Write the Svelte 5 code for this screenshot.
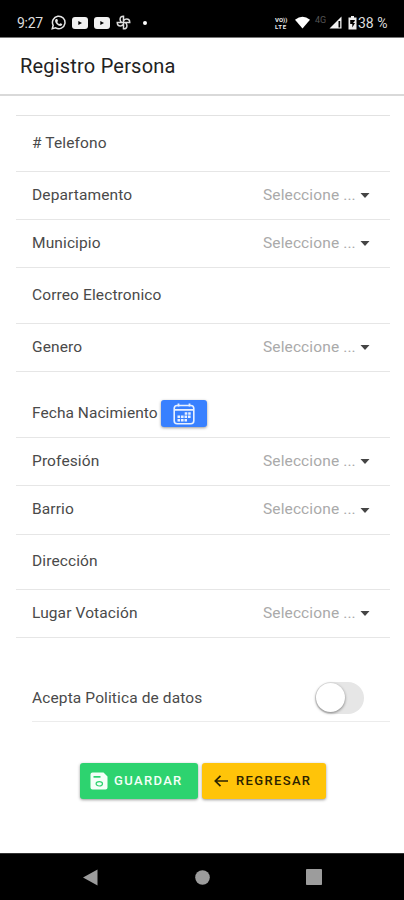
<script>
  const rows = [
    { label: '# Telefono', h: 56 },
    { label: 'Departamento', h: 48, select: true },
    { label: 'Municipio', h: 48, select: true },
    { label: 'Correo Electronico', h: 56 },
    { label: 'Genero', h: 48, select: true },
    { label: 'Fecha Nacimiento', h: 66, date: true },
    { label: 'Profesión', h: 48, select: true },
    { label: 'Barrio', h: 49, select: true },
    { label: 'Dirección', h: 55 },
    { label: 'Lugar Votación', h: 48, select: true }
  ];
  let accepted = $state(false);
</script>

<div class="screen">
  <div class="status">
    <span class="time">9:27</span>
    <svg class="wa" width="15" height="15" viewBox="0 0 24 24" fill="none" stroke="#e8e8e8">
      <path d="M2 22l1.500-5.500A10 10 0 1 1 7.500 20.600z" stroke-width="2.400" />
      <path d="M8 6.500l2 0 1.200 3-1.200 1.500c1 2 2 2.800 3.500 3.500l1.500-1.500 3 1.500c0 2-1.500 3-3 3-4-.4-8.500-5-8.500-8.500 0-1 .5-2 1.500-2.500z" fill="#e8e8e8" stroke="none" />
    </svg>
    <svg class="yt" width="16" height="12" viewBox="0 0 16 12"><rect width="16" height="12" rx="3" fill="#f2f2f2" /><path d="M6.300 3.900v4.200l3.700-2.100z" fill="#000" /></svg>
    <svg class="yt" width="16" height="12" viewBox="0 0 16 12"><rect width="16" height="12" rx="3" fill="#f2f2f2" /><path d="M6.300 3.900v4.200l3.700-2.100z" fill="#000" /></svg>
    <svg class="fan" width="15" height="15" viewBox="0 0 24 24" fill="none" stroke="#ddd" stroke-width="2.400">
      <path d="M12 12V2C8.500 2 6.500 4 6.500 7c0 2 1 3.500 2.500 5zM12 12h10c0-3-2-5.500-5-5.500-2 0-3.500 1-5 2.500zM12 12v10c3 0 5.500-2 5.500-5 0-2-1-3.500-2.500-5zM12 12H2c0 3 2 5.500 5 5.500 2 0 3.500-1 5-2.500z" />
    </svg>
    <i class="dot"></i>
    <span class="grow"></span>
    <span class="vo"><b>VO))</b><b>LTE</b></span>
    <svg class="wifi" width="15" height="13" viewBox="0 0 16 13"><path d="M0 3.500Q8-3 16 3.500L8 13z" fill="#fff" /></svg>
    <span class="net">4G</span>
    <svg class="signal" width="13" height="13" viewBox="0 0 13 13"><path d="M12.500.5v12H.5z" fill="#f4f4f4" /><path d="M9.500 5h1.700v6.500H9.500z" fill="#000" /></svg>
    <svg class="bat" width="9" height="14" viewBox="0 0 9 14"><path d="M3 0h3v1.500h2.500v12h-8v-12H3z" fill="#eee" /><path d="M2.200 4h4.600v1L5 7h2l-2.700 4.500V8H2.200z" fill="#000" /></svg>
    <span class="pct">38 %</span>
  </div>

  <header><h1>Registro Persona</h1></header>

  <main>
    <div class="list">
      {#each rows as row}
        <div class="row" class:daterow={row.date} style:height="{row.h}px">
          <span class="label">{row.label}</span>
          {#if row.date}
            <button class="cal" aria-label="Fecha Nacimiento">
              <svg width="22" height="22" viewBox="0 0 22 22" fill="none" stroke="#e9f1ff">
                <rect x="1.200" y="2.500" width="19.600" height="18.300" rx="3" stroke-width="1.600" />
                <path d="M1.500 6.800h19M5.500.5v3M16.500.5v3" stroke-width="1.800" />
                <path d="M11.700 10.500h6M4.500 13.800h13.500M4.500 17.200h9.500" stroke-width="2.500" stroke-dasharray="2.600 .9" />
              </svg>
            </button>
          {/if}
          {#if row.select}
            <span class="select">Seleccione ...</span>
            <svg class="caret" width="10" height="5" viewBox="0 0 10 5"><path d="M.5 0h9L5 5z" fill="#444" /></svg>
          {/if}
        </div>
      {/each}
    </div>

    <div class="accept">
      <span class="label">Acepta Politica de datos</span>
      <button class="toggle" class:on={accepted} aria-label="Acepta Politica de datos" onclick={() => (accepted = !accepted)}><i></i></button>
    </div>

    <div class="actions">
      <button class="save">
        <svg width="18" height="18" viewBox="0 0 18 18">
          <path d="M2.500.5h11l4 4v11a2 2 0 0 1-2 2h-13a2 2 0 0 1-2-2v-13a2 2 0 0 1 2-2z" fill="#f4fff8" />
          <rect x="3.500" y="4" width="7" height="1.700" fill="#2dd36f" />
          <ellipse cx="9.300" cy="11.800" rx="3.200" ry="2.200" fill="none" stroke="#2dd36f" stroke-width="1.200" />
        </svg>
        <span>GUARDAR</span>
      </button>
      <button class="back">
        <svg width="14" height="12" viewBox="0 0 14 12" fill="none" stroke="#2b2200" stroke-width="1.700"><path d="M6.500.8L1.300 6l5.200 5.200M1.300 6H14" /></svg>
        <span>REGRESAR</span>
      </button>
    </div>
  </main>

  <nav>
    <svg width="15" height="17" viewBox="0 0 15 17"><path d="M0 8.500L14.500.5v16z" fill="#9c9c9c" /></svg>
    <svg width="15" height="15" viewBox="0 0 15 15"><circle cx="7.500" cy="7.500" r="7.300" fill="#9c9c9c" /></svg>
    <svg width="16" height="16" viewBox="0 0 16 16"><rect width="16" height="16" rx=".8" fill="#9c9c9c" /></svg>
  </nav>
</div>

<style>
  .screen { width: 404px; height: 900px; display: flex; flex-direction: column; background: #fff; font-family: Roboto, "Liberation Sans", sans-serif; color: #4a4a4a; overflow: hidden; }
  button { border: 0; padding: 0; font-family: inherit; }
  svg { display: block; flex: none; }
  .status { height: 38px; flex: none; box-sizing: border-box; background: #000; border-bottom: 1px solid #777; display: flex; align-items: center; padding: 8px 16px 0 17px; color: #ddd; }
  .time { width: 34px; font-size: 14px; letter-spacing: -.3px; padding-top: 1px; }
  .yt { margin-left: 6px; }
  .fan { margin-left: 6px; }
  .dot { width: 4px; height: 4px; border-radius: 50%; background: #fff; margin-left: 12px; }
  .grow { flex: 1; }
  .vo { display: flex; flex-direction: column; font-size: 6px; line-height: 7px; width: 14px; color: #eee; }
  .vo b:last-child { letter-spacing: .7px; }
  .wifi { margin-left: 6px; }
  .net { font-size: 9px; color: #555; margin: -6px 0 0 5px; width: 12px; }
  .signal { margin-left: 2px; }
  .bat { margin-left: 6px; }
  .pct { font-size: 14px; width: 30px; margin-left: 1px; white-space: nowrap; padding-top: 1px; }
  header { height: 58px; flex: none; box-sizing: border-box; border-bottom: 2px solid #d9d9d9; display: flex; align-items: center; padding-left: 20px; }
  h1 { margin: 0; font-size: 20px; font-weight: 400; color: #222; letter-spacing: .2px; line-height: 24px; }
  main { flex: 1; display: flex; flex-direction: column; }
  .list { margin: 19px 14px 0 16px; border-top: 1px solid #e2e2e2; }
  .row { box-sizing: border-box; border-bottom: 1px solid #e6e6e6; display: flex; align-items: center; padding: 0 20px 0 16px; }
  .label, .select { font-size: 15.5px; letter-spacing: .12px; line-height: 20px; padding-bottom: 2px; white-space: nowrap; }
  .daterow { padding-top: 18px; }
  .daterow .label { width: 127px; letter-spacing: .05px; }
  .cal { flex: none; width: 46px; height: 27px; margin-left: 2px; border-radius: 3px; background: #3880ff; display: flex; align-items: center; justify-content: center; box-shadow: 0 1px 3px #0006; }
  .select { margin-left: auto; width: 92px; color: #aaa; }
  .caret { margin-left: 5px; }
  .accept { height: 84px; box-sizing: border-box; margin: 0 14px 0 32px; border-bottom: 1px solid #ececec; display: flex; align-items: center; justify-content: space-between; padding: 36px 26px 0 0; }
  .accept .label { padding-bottom: 0; }
  .toggle { width: 49px; height: 32px; border-radius: 16px; background: #e6e6e6; display: flex; align-items: center; }
  .toggle i { width: 29px; height: 29px; margin-left: 1px; border-radius: 50%; background: #fff; box-shadow: 0 1px 3px #0007; }
  .toggle.on { background: #3880ff; justify-content: flex-end; }
  .actions { display: flex; gap: 4px; margin: 41px 0 0 80px; }
  .actions button { height: 36px; border-radius: 3px; display: flex; align-items: center; font-size: 13px; font-weight: 500; letter-spacing: 1.35px; box-shadow: 0 1px 3px #0006; }
  .actions span { padding-bottom: 2px; }
  .actions svg { margin-top: -1px; }
  .save { width: 118px; background: #2dd36f; color: #f4fff8; padding-left: 10px; gap: 6px; }
  .back { width: 124px; background: #ffc409; color: #2b2200; padding-left: 12px; gap: 8px; }
  nav { height: 47px; flex: none; box-sizing: border-box; border-top: 1px solid #333; background: #000; display: flex; align-items: center; justify-content: space-between; padding: 0 82px 0 83px; }
</style>
